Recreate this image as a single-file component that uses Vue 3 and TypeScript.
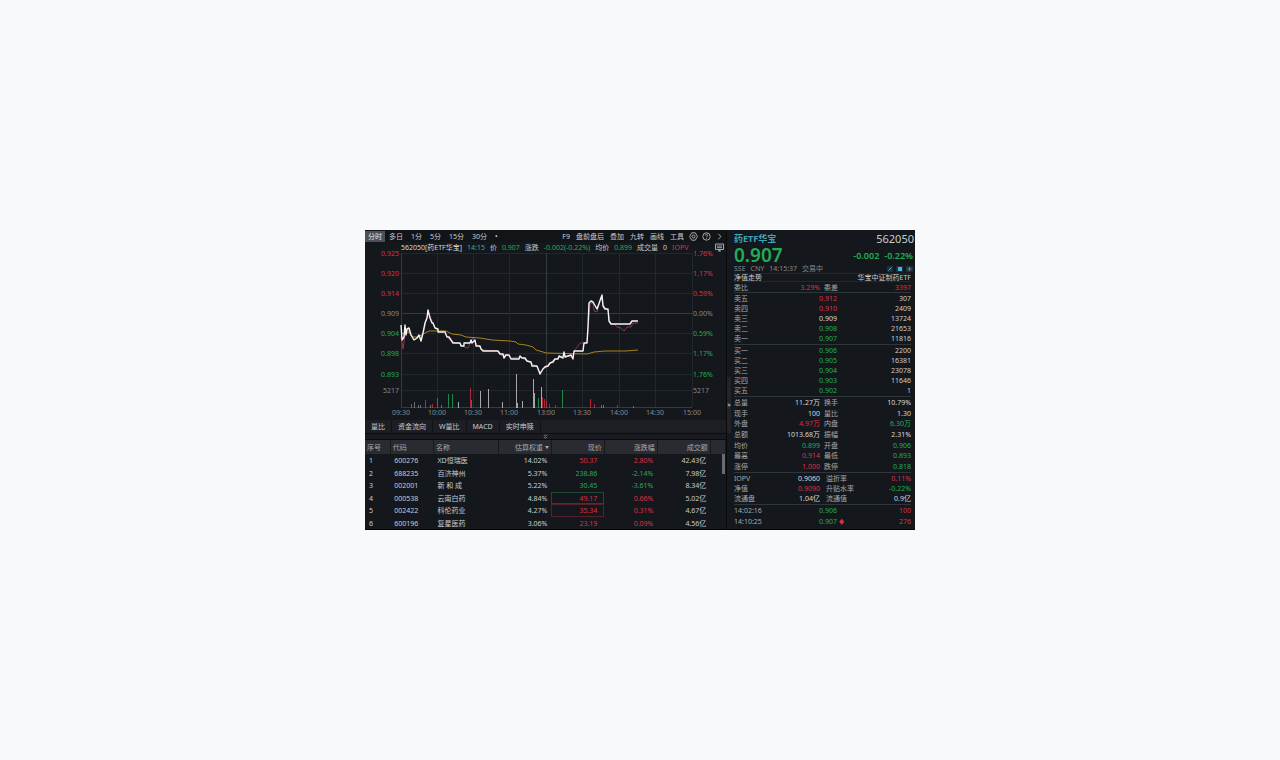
<script setup lang="ts">
type Tone = 'up' | 'down' | 'flat' | 'dim'

interface Holding {
  code: string
  name: string
  weight: string
  price: string
  change: string
  turnover: string
  tone: Tone
  box?: Tone
}

const periods: string[] = ['分时', '多日', '1分', '5分', '15分', '30分', '•']
const tools: string[] = ['F9', '盘前盘后', '叠加', '九转', '画线', '工具']
const indicators: string[] = ['量比', '资金流向', 'W量比', 'MACD', '实时申赎']

const holdings: Holding[] = [
  { code: '600276', name: 'XD恒瑞医', weight: '14.02%', price: '50.37', change: '2.80%', turnover: '42.43亿', tone: 'up' },
  { code: '688235', name: '百济神州', weight: '5.37%', price: '238.86', change: '-2.14%', turnover: '7.98亿', tone: 'down' },
  { code: '002001', name: '新 和 成', weight: '5.22%', price: '30.45', change: '-3.61%', turnover: '8.34亿', tone: 'down' },
  { code: '000538', name: '云南白药', weight: '4.84%', price: '49.17', change: '0.66%', turnover: '5.02亿', tone: 'up', box: 'down' },
  { code: '002422', name: '科伦药业', weight: '4.27%', price: '35.34', change: '0.31%', turnover: '4.67亿', tone: 'up', box: 'up' },
  { code: '600196', name: '复星医药', weight: '3.06%', price: '23.19', change: '0.09%', turnover: '4.56亿', tone: 'up' },
]

type Quote = [string, string, Tone, string]
const asks: Quote[] = [
  ['卖五', '0.912', 'up', '307'],
  ['卖四', '0.910', 'up', '2409'],
  ['卖三', '0.909', 'flat', '13724'],
  ['卖二', '0.908', 'down', '21653'],
  ['卖一', '0.907', 'down', '11816'],
]
const bids: Quote[] = [
  ['买一', '0.906', 'down', '2200'],
  ['买二', '0.905', 'down', '16381'],
  ['买三', '0.904', 'down', '23078'],
  ['买四', '0.903', 'down', '11646'],
  ['买五', '0.902', 'down', '1'],
]

type Stat = [string, string, Tone, string, string, Tone]
const stats: Stat[] = [
  ['总量', '11.27万', 'flat', '换手', '10.79%', 'flat'],
  ['现手', '100', 'flat', '量比', '1.30', 'flat'],
  ['外盘', '4.97万', 'up', '内盘', '6.30万', 'down'],
  ['总额', '1013.68万', 'flat', '振幅', '2.31%', 'flat'],
  ['均价', '0.899', 'down', '开盘', '0.906', 'down'],
  ['最高', '0.914', 'up', '最低', '0.893', 'down'],
  ['涨停', '1.000', 'up', '跌停', '0.818', 'down'],
]
const fundStats: Stat[] = [
  ['IOPV', '0.9060', 'flat', '溢折率', '0.11%', 'up'],
  ['净值', '0.9090', 'up', '升贴水率', '-0.22%', 'down'],
  ['流通盘', '1.04亿', 'flat', '流通值', '0.9亿', 'flat'],
]

const levels: { y: number; left: string; right: string; tone: Tone }[] = [
  { y: 253, left: '0.925', right: '1.76%', tone: 'up' },
  { y: 273, left: '0.920', right: '1.17%', tone: 'up' },
  { y: 293, left: '0.914', right: '0.59%', tone: 'up' },
  { y: 313, left: '0.909', right: '0.00%', tone: 'dim' },
  { y: 333, left: '0.904', right: '0.59%', tone: 'down' },
  { y: 353, left: '0.898', right: '1.17%', tone: 'down' },
  { y: 374, left: '0.893', right: '1.76%', tone: 'down' },
  { y: 390, left: '5217', right: '5217', tone: 'dim' },
]
const times: { x: number; label: string }[] = [
  { x: 401, label: '09:30' },
  { x: 437, label: '10:00' },
  { x: 473, label: '10:30' },
  { x: 509, label: '11:00' },
  { x: 546, label: '13:00' },
  { x: 582, label: '13:30' },
  { x: 619, label: '14:00' },
  { x: 655, label: '14:30' },
  { x: 692, label: '15:00' },
]

const priceLine =
  '401,325 402,340 404,337 405,325 406,335 407,329 409,328 411,335 414,340 417,338 419,335 421,341 423,333 425,323 427,318 428,310 430,318 432,323 433,323 435,328 438,329 438,332 445,332 447,337 449,337 451,340 453,343 460,343 461,346 464,346 464,343 470,343 471,340 472,343 475,340 476,346 480,346 481,349 483,351 498,351 500,354 503,354 504,358 506,355 509,355 511,359 519,359 520,356 522,358 525,358 527,361 531,362 532,366 537,366 540,374 543,369 545,367 548,366 550,363 553,362 555,359 558,359 559,356 563,358 564,352 565,357 571,355 573,359 574,351 583,351 584,343 587,343 588,327 589,303 591,301 593,302 597,309 602,295 603,306 605,309 608,309 609,321 611,324 630,324 632,321 638,321'
const iopvLine =
  '401,336 403,349 405,335 408,330 411,336 415,340 419,336 421,340 424,330 426,320 428,314 430,316 434,326 438,331 444,331 448,338 453,342 457,343 461,344 464,347 468,348 470,343 473,338 475,341 477,345 483,350 498,351 502,356 506,354 511,358 520,357 527,361 533,364 537,367 540,372 545,366 549,365 553,360 558,358 563,355 571,357 575,350 580,343 587,343 590,304 593,303 594,311 597,312 601,298 604,306 608,311 610,323 614,324 617,327 621,328 624,331 627,327 631,327 633,323 638,323'
const averageLine =
  '401,333 405,334 409,332 413,337 418,337 423,334 429,331 446,331 452,334 461,335 466,337 480,338 492,340 510,341 516,342 518,344 526,345 533,347 536,350 543,352 546,353 587,354 594,352 605,351 626,351 638,350'

const volumes: { x: number; top: number; tone: Tone }[] = [
  { x: 411, top: 404, tone: 'down' }, { x: 414, top: 402, tone: 'dim' }, { x: 418, top: 405, tone: 'dim' },
  { x: 420, top: 405, tone: 'dim' }, { x: 425, top: 400, tone: 'up' }, { x: 430, top: 405, tone: 'dim' },
  { x: 432, top: 404, tone: 'up' }, { x: 437, top: 398, tone: 'down' }, { x: 441, top: 405, tone: 'dim' },
  { x: 448, top: 394, tone: 'down' }, { x: 452, top: 394, tone: 'down' }, { x: 458, top: 402, tone: 'flat' },
  { x: 470, top: 388, tone: 'up' }, { x: 471, top: 400, tone: 'down' }, { x: 480, top: 391, tone: 'flat' },
  { x: 488, top: 389, tone: 'flat' }, { x: 502, top: 402, tone: 'flat' }, { x: 516, top: 374, tone: 'flat' },
  { x: 517, top: 403, tone: 'flat' }, { x: 522, top: 401, tone: 'flat' }, { x: 533, top: 379, tone: 'flat' },
  { x: 534, top: 393, tone: 'flat' }, { x: 538, top: 398, tone: 'down' }, { x: 541, top: 387, tone: 'flat' },
  { x: 542, top: 397, tone: 'up' }, { x: 544, top: 399, tone: 'up' }, { x: 546, top: 401, tone: 'up' },
  { x: 549, top: 404, tone: 'up' }, { x: 555, top: 405, tone: 'up' }, { x: 562, top: 390, tone: 'down' },
  { x: 590, top: 399, tone: 'up' }, { x: 594, top: 404, tone: 'up' }, { x: 601, top: 405, tone: 'dim' },
  { x: 603, top: 405, tone: 'dim' }, { x: 617, top: 405, tone: 'up' }, { x: 633, top: 406, tone: 'dim' },
]
</script>

<template>
  <div class="page">
    <main class="terminal">
      <section class="left">
        <nav class="toolbar">
          <button v-for="(p, i) in periods" :key="p" type="button" :class="{ active: i === 0 }">{{ p }}</button>
          <span class="spacer"></span>
          <button v-for="t in tools" :key="t" type="button">{{ t }}</button>
          <button type="button" aria-label="设置">
            <svg class="icon" viewBox="0 0 9 9"><path d="M2.7.8h3.6L8.4 4.5 6.3 8.2H2.7L.6 4.5z" /><circle cx="4.500" cy="4.500" r="1.500" /></svg>
          </button>
          <button type="button" aria-label="帮助">
            <svg class="icon" viewBox="0 0 9 9"><circle cx="4.500" cy="4.500" r="3.700" /><path d="M3.3 3.600c0-1.800 2.500-1.500 2.300 0-.1.700-1.100.8-1.100 1.700M4.500 6.100v.8" /></svg>
          </button>
          <button type="button" aria-label="更多">
            <svg class="icon" viewBox="0 0 9 9"><path d="M3.300 1.800 6 4.500 3.300 7.200" /></svg>
          </button>
        </nav>

        <div class="info">
          <span class="flat">562050[药ETF华宝]</span>
          <span class="cyan">14:15</span>
          <span>价</span>
          <span class="down">0.907</span>
          <span>涨跌</span>
          <span class="down">-0.002(-0.22%)</span>
          <span>均价</span>
          <span class="down">0.899</span>
          <span>成交量</span>
          <span>0</span>
          <span class="up">IOPV</span>
          <svg class="screen" viewBox="0 0 9 9"><path d="M.5 1h8v5.500h-8zM2 3h5M2 4.700h5M3 8h3M4.500 6.500V8" /></svg>
        </div>

        <svg class="chart" viewBox="365 252 361 166">
          <g class="grid">
            <line v-for="l in levels" :key="l.y" x1="401" x2="692" :y1="l.y + 0.5" :y2="l.y + 0.5" :class="{ strong: l.y === 313 }" />
            <line v-for="t in times" :key="t.x" :x1="t.x + 0.5" :x2="t.x + 0.5" y1="253" y2="407" :class="{ strong: t.x === 546 || t.x === 401 }" />
            <line class="strong" x1="401" x2="692" y1="407.500" y2="407.500" />
          </g>
          <g v-for="l in levels" :key="l.left" :class="l.tone">
            <text x="399" :y="l.y + 3" text-anchor="end">{{ l.left }}</text>
            <text x="693" :y="l.y + 3">{{ l.right }}</text>
          </g>
          <text v-for="t in times" :key="t.label" class="dim" :x="t.x" y="415" text-anchor="middle">{{ t.label }}</text>
          <rect v-for="v in volumes" :key="v.x" class="bar" :class="v.tone" :x="v.x" :y="v.top" width="1" :height="408 - v.top" />
          <polyline class="iopv" :points="iopvLine" />
          <polyline class="average" :points="averageLine" />
          <polyline class="price-line" :points="priceLine" />
        </svg>

        <nav class="tabs">
          <button v-for="t in indicators" :key="t" type="button">{{ t }}</button>
        </nav>
        <div class="splitter">
          <svg viewBox="0 0 5 5"><path d="M.8.600 2.500 2 4.200.600M.8 2.800 2.500 4.200 4.200 2.800" /></svg>
        </div>

        <div class="holdings-wrap">
          <table class="holdings">
            <colgroup>
              <col class="c-no" /><col class="c-code" /><col class="c-name" /><col class="c-num" /><col class="c-num" /><col class="c-num" /><col class="c-num" /><col class="c-end" />
            </colgroup>
            <thead>
              <tr>
                <th>序号</th><th>代码</th><th>名称</th>
                <th class="num">估算权重 <i class="sort"></i></th>
                <th class="num">现价</th><th class="num">涨跌幅</th><th class="num">成交额</th><th></th>
              </tr>
            </thead>
            <tbody>
              <tr v-for="(h, i) in holdings" :key="h.code">
                <td>{{ i + 1 }}</td>
                <td>{{ h.code }}</td>
                <td>{{ h.name }}</td>
                <td class="num">{{ h.weight }}</td>
                <td class="num last" :class="[h.tone, h.box ? 'box-' + h.box : '']">{{ h.price }}</td>
                <td class="num" :class="h.tone">{{ h.change }}</td>
                <td class="num">{{ h.turnover }}</td>
                <td></td>
              </tr>
            </tbody>
          </table>
          <span class="thumb"></span>
        </div>
      </section>

      <div class="gutter"><span>»</span></div>

      <aside class="right">
        <header class="head">
          <h1>药ETF华宝</h1>
          <span class="symbol">562050</span>
        </header>
        <div class="quote down">
          <strong>0.907</strong>
          <span>-0.002</span>
          <span>-0.22%</span>
        </div>
        <div class="market">
          <span>SSE</span><span>CNY</span><span>14:15:37</span><span>交易中</span>
          <svg viewBox="0 0 28 8">
            <rect class="tile" x="1" y="1" width="6" height="6" /><path class="pen" d="M2.500 5.500 5.500 2.500" />
            <rect class="tile" x="10" y="1" width="7" height="6" /><rect class="dot" x="12" y="2" width="4" height="4" />
            <rect class="tile" x="20" y="1" width="7" height="6" /><path class="plus" d="M21.500 4h4M23.500 2v4" />
          </svg>
        </div>
        <div class="ticker"><span>净值走势</span><span>华宝中证制药ETF</span></div>

        <table class="stats ratio">
          <tbody>
            <tr><th>委比</th><td class="up">3.29%</td><th>委差</th><td class="up">3397</td></tr>
          </tbody>
        </table>
        <table v-for="(side, i) in [asks, bids]" :key="i" class="book">
          <tbody>
            <tr v-for="q in side" :key="q[0]"><th>{{ q[0] }}</th><td :class="q[2]">{{ q[1] }}</td><td>{{ q[3] }}</td></tr>
          </tbody>
        </table>
        <table class="stats main">
          <tbody>
            <tr v-for="s in stats" :key="s[0]"><th>{{ s[0] }}</th><td :class="s[2]">{{ s[1] }}</td><th>{{ s[3] }}</th><td :class="s[5]">{{ s[4] }}</td></tr>
          </tbody>
        </table>
        <table class="stats fund">
          <tbody>
            <tr v-for="s in fundStats" :key="s[0]"><th>{{ s[0] }}</th><td :class="s[2]">{{ s[1] }}</td><th>{{ s[3] }}</th><td :class="s[5]">{{ s[4] }}</td></tr>
          </tbody>
        </table>
        <table class="book ticks">
          <tbody>
            <tr><th>14:02:16</th><td class="down">0.906</td><td class="up">100</td></tr>
            <tr><th>14:10:25</th><td class="down">0.907</td><td class="up"><i class="mark">♦</i>276</td></tr>
            <tr><th>14:11:40</th><td class="down">0.907</td><td class="up">276</td></tr>
          </tbody>
        </table>
      </aside>
    </main>
  </div>
</template>

<style>
body {
  background: #f7f9fb;
}
</style>

<style scoped>
.page {
  min-height: 100vh;
  display: flex;
  align-items: center;
  justify-content: center;
}
.terminal {
  width: 100%;
  max-width: 550px;
  max-height: 300px;
  box-sizing: border-box;
  overflow: hidden;
  display: flex;
  background: #14181c;
  border-bottom: 1px solid #050608;
  color: #c9ccd0;
  font: 7px/9px "Noto Sans", "Noto Sans CJK SC", sans-serif;
  white-space: nowrap;
}
button {
  border: 0;
  margin: 0;
  padding: 0 4px;
  background: none;
  color: inherit;
  font: inherit;
  flex: none;
}
table {
  width: 100%;
  border-collapse: collapse;
  table-layout: fixed;
}
th,
td {
  padding: 0;
  font-weight: 400;
  text-align: left;
}
.up { color: #dc3046; fill: #dc3046; }
.down { color: #22ac56; fill: #22ac56; }
.flat { color: #d5d7da; fill: #d5d7da; }
.dim { color: #85898e; fill: #85898e; }
.cyan { color: #39a9b8; }

.left {
  flex: 1;
  min-width: 0;
  display: flex;
  flex-direction: column;
}
.toolbar {
  height: 12px;
  display: flex;
  align-items: center;
  background: #121518;
}
.toolbar button {
  height: 11px;
}
.toolbar button.active {
  background: #4d5057;
  color: #e4e6e8;
  padding: 0 3px;
}
.spacer {
  flex: 1;
}
.toolbar .spacer ~ button {
  padding: 0 3px;
}
.toolbar .spacer ~ button[aria-label] {
  padding: 0 2px;
}
.icon,
.screen {
  display: block;
  width: 9px;
  height: 9px;
  fill: none;
  stroke: #b4b7bb;
  stroke-width: 0.9;
}
.info {
  display: flex;
  align-items: center;
  gap: 5px;
  height: 10px;
  padding: 0 2px 0 36px;
}
.screen {
  margin-left: auto;
}
.chart {
  display: block;
  width: 100%;
  overflow: visible;
  font-size: 7px;
}
.grid line {
  stroke: #22272b;
  stroke-width: 1;
}
.grid .strong {
  stroke: #363b3f;
}
.bar { opacity: 0.75; }
polyline {
  fill: none;
  stroke-linejoin: round;
}
.price-line { stroke: #f4f5f6; stroke-width: 1.4; }
.iopv { stroke: #a83d4f; stroke-width: 0.8; }
.average { stroke: #a9811f; stroke-width: 1; }

.tabs {
  margin-top: 2px;
  height: 13px;
  display: flex;
  background: #1c1e23;
  border-bottom: 1px solid #0b0c0e;
}
.tabs button {
  padding: 0 6px;
  border-right: 1px solid #101215;
}
.splitter {
  height: 6px;
  background: #191b20;
  border-bottom: 1px solid #0b0c0e;
  box-sizing: border-box;
}
.splitter svg {
  display: block;
  width: 5px;
  height: 5px;
  margin: 0 auto;
  fill: none;
  stroke: #a0a3a7;
  stroke-width: 0.7;
}
.holdings-wrap {
  position: relative;
}
.c-no { width: 7%; }
.c-code { width: 12%; }
.c-name { width: 18%; }
.c-num { width: 53px; }
.holdings th {
  height: 14px;
  background: #292b30;
  color: #a6a9ad;
  border-right: 1px solid #17191d;
  padding: 0 2px;
}
.holdings td {
  height: 13px;
  box-sizing: border-box;
  padding: 0 4px;
}
.holdings tr:nth-child(even) td {
  height: 12px;
}
.holdings .num {
  text-align: right;
}
.holdings td.last {
  padding-right: 7px;
}
.box-down { box-shadow: inset 0 0 0 1px #1c4a32; }
.box-up { box-shadow: inset 0 0 0 1px #55202b; }
.sort {
  display: inline-block;
  border: 2px solid transparent;
  border-top: 3px solid #a6a9ad;
  border-bottom: 0;
  vertical-align: 1px;
}
.thumb {
  position: absolute;
  top: 14px;
  right: 1px;
  width: 3px;
  height: 20px;
  background: #686b70;
}

.gutter {
  width: 5px;
  box-sizing: border-box;
  display: flex;
  flex-direction: column;
  align-items: center;
  justify-content: center;
  border-left: 1px solid #08090b;
  background: linear-gradient(#15181c 0 49%, #22242a 49% 68%, #15181c 68%);
}
.gutter span {
  margin-top: 49px;
}

.right {
  flex: 0 0 184px;
  box-sizing: border-box;
  padding: 0 4px 0 3px;
}
.head,
.quote,
.market,
.ticker {
  display: flex;
  align-items: center;
}
.head {
  height: 16px;
  justify-content: space-between;
}
h1 {
  margin: 0;
  color: #3fa3ba;
  font-size: 9px;
  font-weight: 700;
}
.symbol {
  font-size: 11px;
  margin-right: -3px;
}
.quote {
  height: 18px;
  gap: 5px;
  font-size: 9px;
  font-weight: 600;
  margin-right: -2px;
}
.quote strong {
  font-size: 19px;
  font-weight: 600;
  margin-right: auto;
}
.market {
  height: 9px;
  gap: 5px;
  color: #85898e;
}
.market svg {
  width: 28px;
  height: 8px;
  margin: 0 -3px 0 auto;
}
.tile { fill: #20303a; }
.pen { stroke: #55b4d8; }
.dot { fill: #4ab2dd; }
.plus { stroke: #6f858e; }
.ticker {
  height: 7px;
  justify-content: space-between;
  overflow: hidden;
  border-top: 1px solid #24282c;
  border-bottom: 1px solid #24282c;
}
.right table {
  border-bottom: 1px solid #30353a;
}
.right th {
  color: #a6a9ad;
}
.right td {
  text-align: right;
}
.ratio { height: 11px; }
.book { height: 52px; }
.book th { width: 40px; }
.book td:nth-child(2) { width: 63px; }
.stats th:first-child { width: 26px; }
.stats td:nth-child(2) { width: 60px; }
.stats th:nth-child(3) { width: 36px; padding-left: 4px; }
.fund th:nth-child(3) { padding-left: 6px; }
.right .main { height: 76px; }
.right .fund { height: 32px; }
.right .ticks {
  height: 33px;
  border: 0;
}
.mark {
  float: left;
  margin-left: 1px;
  font-style: normal;
}
</style>
